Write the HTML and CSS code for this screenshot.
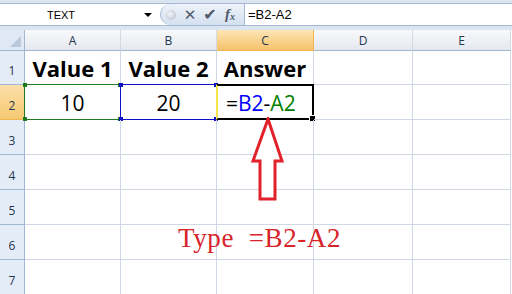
FILE: index.html
```html
<!DOCTYPE html>
<html lang="en">
	<head>
		<meta charset="UTF-8" />
		<title>Subtract in Excel</title>
		<link rel="stylesheet" href="styles.css">
	</head>
	<body>
		<div id="formula-bar">
			<div class="name-box">
				<span class="name">TEXT</span>
				<span class="drop"></span>
			</div>
			<div class="fx-buttons">
				<span class="dot"></span>
				<span class="btn">&#x2715;</span>
				<span class="btn check">&#x2714;</span>
				<span class="btn fx"><i>f</i><sub>x</sub></span>
			</div>
			<div class="formula">=B2-A2</div>
		</div>

		<div id="sheet">
			<div class="corner"><span></span></div>
			<div class="col-head">A</div>
			<div class="col-head">B</div>
			<div class="col-head active">C</div>
			<div class="col-head">D</div>
			<div class="col-head">E</div>

			<div class="row-head">1</div>
			<div class="cell bold">Value 1</div>
			<div class="cell bold">Value 2</div>
			<div class="cell bold">Answer</div>
			<div class="cell"></div>
			<div class="cell"></div>

			<div class="row-head active">2</div>
			<div class="cell">10<span class="ref green"><b class="h tl"></b><b class="h tr"></b><b class="h bl"></b><b class="h br"></b></span></div>
			<div class="cell">20<span class="ref blue"><b class="h tl"></b><b class="h tr"></b><b class="h bl"></b><b class="h br"></b></span></div>
			<div class="cell edit">=<span class="c-blue">B2</span>-<span class="c-green">A2</span><span class="cursor"><b class="fill"></b></span></div>
			<div class="cell"></div>
			<div class="cell"></div>

			<div class="row-head">3</div>
			<div class="cell"></div><div class="cell"></div><div class="cell"></div><div class="cell"></div><div class="cell"></div>
			<div class="row-head">4</div>
			<div class="cell"></div><div class="cell"></div><div class="cell"></div><div class="cell"></div><div class="cell"></div>
			<div class="row-head">5</div>
			<div class="cell"></div><div class="cell"></div><div class="cell"></div><div class="cell"></div><div class="cell"></div>
			<div class="row-head">6</div>
			<div class="cell"></div><div class="cell"></div><div class="cell"></div><div class="cell"></div><div class="cell"></div>
			<div class="row-head">7</div>
			<div class="cell"></div><div class="cell"></div><div class="cell"></div><div class="cell"></div><div class="cell"></div>

			<!-- annotation drawn over the grid -->
			<svg class="arrow" width="40" height="90" viewBox="0 0 40 90">
				<polygon points="20,2 34,44 27,44 27,82 12,82 12,44 5,44" />
			</svg>
			<div class="note">Type&nbsp;&nbsp;=B2-A2</div>
		</div>
	</body>
</html>
```

FILE: styles.css
```css
body {
	margin: 0;
	width: 512px;
	height: 294px;
	overflow: hidden;
	background: #fff;
	font-family: "Open Sans", Arial, sans-serif;
}

/* formula bar */
#formula-bar {
	display: flex;
	height: 21px;
	margin-top: 3px;
	border-top: 1px solid #a4b9d4;
	border-bottom: 1px solid #a4b9d4;
	background: #fff;
	box-shadow: 0 -3px 0 #dbe5f2, 0 4px 0 #dbe5f2;
}
.name-box {
	width: 160px;
	display: flex;
	align-items: center;
	position: relative;
}
.name {
	flex: 1;
	text-align: center;
	padding-right: 22px;
	font: 11px "Liberation Sans", Arial, sans-serif;
	color: #000;
}
.drop {
	width: 0;
	height: 0;
	border-left: 4px solid transparent;
	border-right: 4px solid transparent;
	border-top: 4px solid #000;
	margin-right: 8px;
}
.fx-buttons {
	width: 84px;
	display: flex;
	align-items: center;
	background: linear-gradient(#eef3fa, #d4e0ef);
	border-radius: 11px 0 0 11px;
	border-left: 1px solid #a4b9d4;
	box-sizing: border-box;
}
.dot {
	width: 10px;
	height: 10px;
	border-radius: 50%;
	background: radial-gradient(circle at 40% 40%, #f4f6f9, #aeb8c6);
	margin: 0 4px 0 5px;
}
.btn {
	width: 20px;
	text-align: center;
	font: bold 15px "DejaVu Sans", sans-serif;
	color: #505a68;
}
.check {
	font-size: 16px;
}
.fx {
	font: italic bold 15px "Liberation Serif", serif;
	color: #505a68;
}
.fx sub {
	font-size: 10px;
	vertical-align: -1px;
}
.formula {
	flex: 1;
	border-left: 1px solid #a4b9d4;
	padding-left: 3px;
	font: 13px "Liberation Sans", Arial, sans-serif;
	line-height: 21px;
	color: #000;
}

/* sheet grid */
#sheet {
	position: relative;
	margin-top: 4px;
	display: grid;
	grid-template-columns: 25px 96px 96px 97px 99px 98px;
	grid-template-rows: 21px 34px 35px 35px 35px 35px 35px 35px;
}
.corner {
	background: #dfe8f4;
	border-right: 1px solid #9eb6ce;
	border-bottom: 1px solid #9eb6ce;
	position: relative;
}
.corner span {
	position: absolute;
	right: 3px;
	bottom: 3px;
	width: 0;
	height: 0;
	border-left: 11px solid transparent;
	border-bottom: 11px solid #b9c8db;
}
.col-head {
	background: linear-gradient(#f8f9fb, #e4e8ef);
	border-right: 1px solid #d4dae3;
	border-bottom: 1px solid #9eb6ce;
	display: flex;
	align-items: center;
	justify-content: center;
	font-size: 12px;
	color: #243650;
}
.col-head.active {
	background: linear-gradient(#fde5b4, #f5c26b);
	border-right-color: #f2b450;
	border-bottom-color: #f2b450;
}
.row-head {
	background: #e4ecf7;
	border-right: 1px solid #9eb6ce;
	border-bottom: 1px solid #9eb6ce;
	display: flex;
	align-items: flex-end;
	justify-content: center;
	padding-bottom: 5px;
	box-sizing: border-box;
	font-size: 12px;
	color: #243650;
}
.row-head.active {
	background: linear-gradient(#fce0a8, #f6c872);
	border-bottom-color: #f2b450;
}
.cell {
	border-right: 1px solid #d0d7e5;
	border-bottom: 1px solid #d0d7e5;
	position: relative;
	display: flex;
	align-items: flex-end;
	justify-content: center;
	padding-bottom: 2px;
	box-sizing: border-box;
	font-size: 21px;
	line-height: 28px;
	color: #000;
}
.bold {
	font-weight: bold;
	font-size: 22px;
}
.edit {
	justify-content: flex-start;
	padding-left: 9px;
}
.c-blue {
	color: #0000ff;
}
.c-green {
	color: #008000;
}

/* range reference outlines */
.ref {
	position: absolute;
	left: -1px;
	top: -1px;
	right: -1px;
	bottom: -1px;
	border: 1px solid;
}
.ref.green {
	border-color: #1f7a1f;
	color: #1f7a1f;
}
.ref.blue {
	border-color: #1010c8;
	color: #1010c8;
}
.h {
	position: absolute;
	width: 4px;
	height: 4px;
	background: currentColor;
}
.tl { left: -2px; top: -2px; }
.tr { right: -2px; top: -2px; }
.bl { left: -2px; bottom: -2px; }
.br { right: -2px; bottom: -2px; }
.cursor {
	position: absolute;
	left: -1px;
	top: -1px;
	right: -1px;
	bottom: -1px;
	border: 2px solid #000;
	border-left-color: #f4e64a;
}
.fill {
	position: absolute;
	right: -4px;
	bottom: -4px;
	width: 5px;
	height: 5px;
	background: #000;
	border: 1px solid #fff;
}

/* annotation */
.arrow {
	position: absolute;
	left: 248px;
	top: 87px;
}
.arrow polygon {
	fill: #fff;
	stroke: #e2222a;
	stroke-width: 3;
	stroke-linejoin: miter;
}
.note {
	position: absolute;
	left: 178px;
	top: 193px;
	font: 27px "Liberation Serif", "Times New Roman", serif;
	color: #d9232b;
	letter-spacing: 0.6px;
}
```
